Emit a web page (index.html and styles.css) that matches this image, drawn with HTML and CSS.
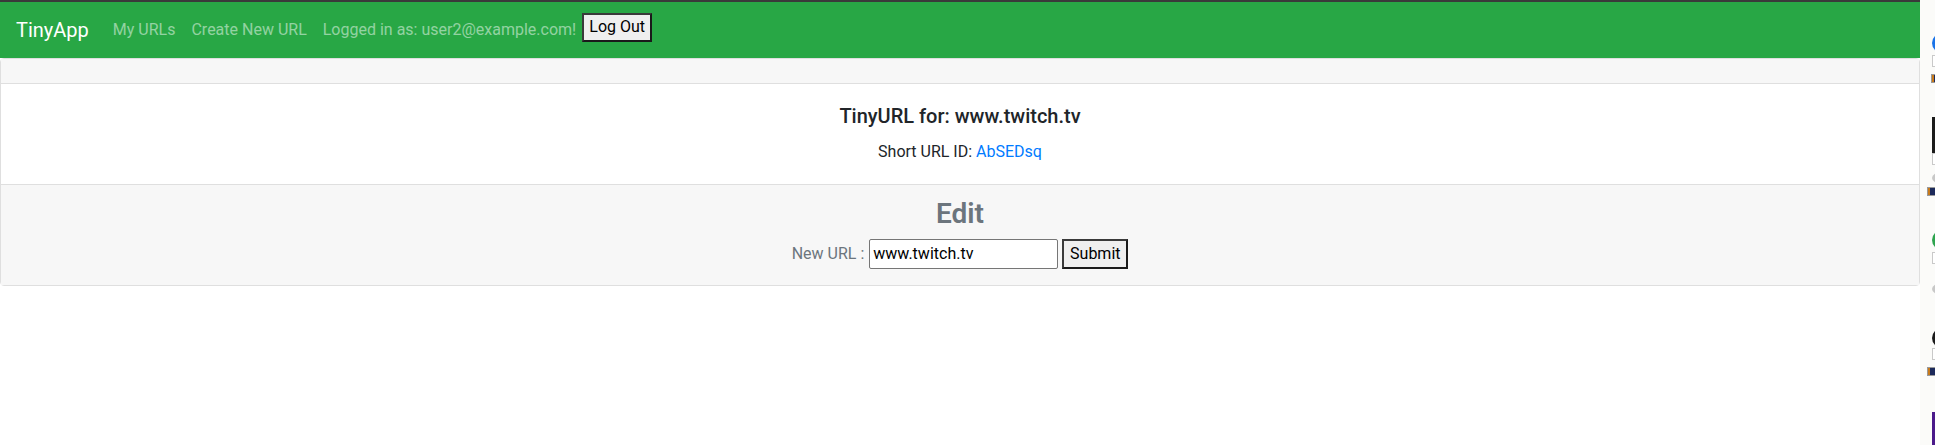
FILE: index.html
```html
<!DOCTYPE html>
<html lang="en">
<head>
<meta charset="utf-8">
<title>TinyApp</title>
<link rel="stylesheet" href="styles.css">
</head>
<body>
<div class="screen">
  <div class="page">
    <div class="topline"></div>
    <nav class="navbar">
      <a class="brand" href="#">TinyApp</a>
      <a class="nav-link" href="#">My URLs</a>
      <a class="nav-link" href="#">Create New URL</a>
      <span class="nav-link nav-user">Logged in as: user2@example.com!</span>
      <button class="btn btn-nav" type="button">Log Out</button>
    </nav>
    <div class="card">
      <div class="card-header"></div>
      <div class="card-body">
        <h5 class="card-title">TinyURL for: www.twitch.tv</h5>
        <p class="card-text">Short URL ID: <a class="link" href="#">AbSEDsq</a></p>
      </div>
      <div class="card-footer">
        <h3 class="edit-title">Edit</h3>
        <form class="edit-form">
          <label class="edit-label" for="newurl">New URL :</label>
          <input class="edit-input" id="newurl" type="text" value="www.twitch.tv">
          <button class="btn" type="submit">Submit</button>
        </form>
      </div>
    </div>
  </div>
  <div class="strip">
    <span class="ico circ blue" style="top:33px"></span>
    <span class="ico box" style="top:55px"></span>
    <span class="ico tag" style="top:74px;left:11px"></span>
    <span class="ico rect black" style="top:117px"></span>
    <span class="ico box" style="top:153px"></span>
    <span class="ico circ gray" style="top:172px"></span>
    <span class="ico tag" style="top:187px;left:7px"></span>
    <span class="ico circ green" style="top:230px"></span>
    <span class="ico box" style="top:252px"></span>
    <span class="ico circ gray" style="top:283px"></span>
    <span class="ico circ black" style="top:328px"></span>
    <span class="ico box" style="top:348px"></span>
    <span class="ico tag" style="top:367px;left:7px"></span>
    <span class="ico rect purple" style="top:412px"></span>
  </div>
</div>
</body>
</html>
```
FILE: styles.css
```css
* { box-sizing: border-box; }
html, body { margin: 0; padding: 0; background: #fff; }
body { font-family: Roboto, "Noto Sans", sans-serif; font-size: 16px; color: #212529; line-height: 1.5; }
.screen { display: flex; width: 1935px; height: 445px; overflow: hidden; }
.page { width: 1920px; flex: none; background: #fff; }
.topline { height: 2px; background: #3a3a3a; }
.navbar { height: 56px; background: #28a745; display: flex; align-items: center; padding: 0 16px; white-space: nowrap; }
.brand { color: #fff; font-size: 20px; text-decoration: none; margin-right: 16px; line-height: 30px; }
.nav-link { color: rgba(255,255,255,.5); text-decoration: none; padding: 0 8px; }
.nav-user { padding-right: 6px; }
.btn { font-family: inherit; font-size: 16px; background: #efefef; color: #000; border: 2px solid #1a1a1a; border-top-color: #3a3a3a; border-left-color: #3a3a3a; padding: 0 4px; height: 30px; line-height: 1; white-space: nowrap; flex: none; }
.btn-nav { width: 70px; height: 29px; margin-top: -6px; }
.card { border: 1px solid #dfdfdf; border-radius: 4px; }
.card-header { height: 25px; background: #f7f7f7; border-bottom: 1px solid #dfdfdf; }
.card-body { padding: 20px; text-align: center; }
.card-title { margin: 0 0 12px; font-size: 20px; font-weight: 500; line-height: 1.2; }
.card-text { margin: 0; }
.link { color: #007bff; text-decoration: none; }
.card-footer { background: #f7f7f7; border-top: 1px solid #dfdfdf; padding: 12px 20px 16px; text-align: center; }
.edit-title { margin: 0 0 8px; font-size: 28px; font-weight: 600; line-height: 1.2; color: #6c757d; }
.edit-form { display: flex; justify-content: center; align-items: center; gap: 4px; }
.edit-label { color: #6c757d; margin-right: 1px; }
.edit-input { font-family: inherit; font-size: 16px; width: 189px; height: 30px; border: 1px solid #767676; border-radius: 2px; padding: 0 3px; color: #000; background: #fff; }
.edit-form .btn { width: 66px; }
.strip { width: 15px; flex: none; background: #fbfbf9; position: relative; }
.ico { position: absolute; left: 12px; display: block; }
.circ { width: 20px; height: 20px; border-radius: 50%; }
.blue { background: #1a73e8; }
.green { background: #2ea44f; }
.gray { background: #c8c8c8; height: 12px; }
.black { background: #1b1b1b; }
.purple { background: #4b1a8a; }
.rect { width: 4px; height: 36px; }
.rect.purple { height: 33px; }
.box { width: 4px; height: 12px; border: 1px solid #c9c9c9; border-right: none; background: #fff; }
.tag { width: 10px; height: 9px; background: #1c2a5a; border: 1px solid #999; box-shadow: inset 2px 0 0 #c87a1a; }
```
